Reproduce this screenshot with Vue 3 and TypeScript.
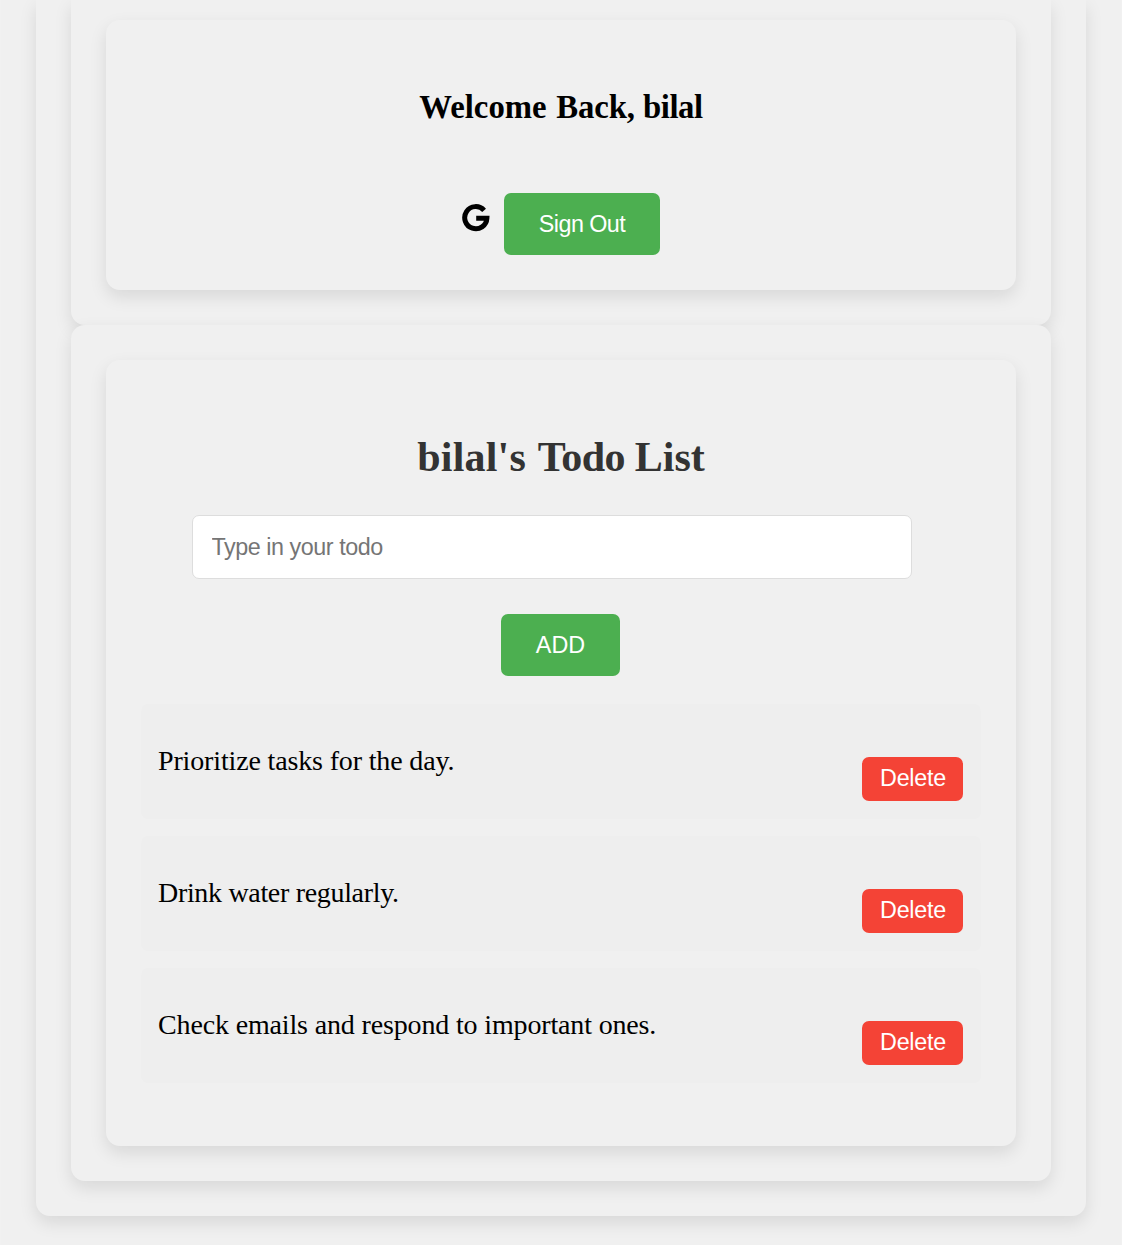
<script setup lang="ts">
import { ref } from 'vue'

const user = ref('bilal')
const draft = ref('')
const todos = ref<string[]>([
  'Prioritize tasks for the day.',
  'Drink water regularly.',
  'Check emails and respond to important ones.',
])

function add(): void {
  const text = draft.value.trim()
  if (!text) return
  todos.value.push(text)
  draft.value = ''
}

function remove(index: number): void {
  todos.value.splice(index, 1)
}
</script>

<template>
  <main class="page">
    <div class="card outer">
      <section class="card account">
        <div class="card welcome">
          <h3>Welcome <span class="back">Back, </span><span class="name">{{ user }}</span></h3>
          <div class="session">
            <svg class="google" viewBox="0 0 28 28" aria-hidden="true">
              <path
                d="M22.1 6.3A11.1 11.1 0 1 0 24.9 14.3H14.2"
                fill="none"
                stroke="#000"
                stroke-width="5"
              />
            </svg>
            <button class="green sign-out">Sign Out</button>
          </div>
        </div>
      </section>
      <section class="card todo">
        <div class="card board">
          <h2><span class="owner">{{ user }}'s </span><span class="kind">Todo </span>List</h2>
          <input v-model="draft" type="text" placeholder="Type in your todo" />
          <button class="green add" @click="add">ADD</button>
          <ul>
            <li v-for="(todo, i) in todos" :key="i">
              <span class="label">{{ todo }}</span>
              <button class="delete" @click="remove(i)">Delete</button>
            </li>
          </ul>
        </div>
      </section>
    </div>
  </main>
</template>

<style>
body {
  margin: 0;
  background: #f1f1f1;
  overflow: hidden;
}
</style>

<style scoped>
.page {
  box-sizing: border-box;
  height: 1245px;
  margin: 0 1px;
  padding: 0 35px;
  overflow: hidden;
  background: #f0f0f0;
  font-family: 'Liberation Serif', 'Times New Roman', serif;
  font-size: 28px;
  color: #000;
}
.card {
  box-sizing: border-box;
  background: #f0f0f0;
  border-radius: 14px;
  box-shadow: 0 7px 17.5px rgba(0, 0, 0, 0.1);
}
.outer {
  height: 1216px;
  padding: 0 35px;
  border-radius: 0 0 14px 14px;
}
.account {
  height: 325px;
  padding: 20px 35px 35px;
  border-radius: 0 0 14px 14px;
}
.welcome {
  height: 270px;
  padding-top: 68px;
}
h3 {
  margin: 0;
  height: 38px;
  line-height: 38px;
  font-size: 32.76px;
  text-align: center;
  white-space: pre;
}
.back {
  margin-left: 1.5px;
  letter-spacing: -0.1px;
}
.name {
  letter-spacing: -0.45px;
}
.session {
  display: flex;
  justify-content: center;
  align-items: flex-start;
  gap: 14px;
  margin-top: 67px;
}
.google {
  width: 28px;
  height: 28px;
  margin-top: 11px;
}
button {
  display: block;
  box-sizing: border-box;
  padding: 0;
  border: 0;
  border-radius: 7px;
  color: #fff;
  font-family: 'Liberation Sans', Arial, sans-serif;
  font-size: 23.33px;
  white-space: nowrap;
}
.green {
  height: 62px;
  background: #4caf50;
}
.sign-out {
  width: 156px;
  letter-spacing: -0.55px;
}
.todo {
  height: 856px;
  padding: 35px;
}
.board {
  height: 786px;
  padding: 75px 35px 0;
}
h2 {
  margin: 0;
  height: 45px;
  line-height: 44px;
  font-size: 42px;
  color: #333;
  text-align: center;
  white-space: pre;
}
.owner {
  letter-spacing: 0.2px;
}
.kind {
  margin-left: 1px;
  letter-spacing: -0.6px;
}
input {
  display: block;
  box-sizing: border-box;
  width: 720px;
  height: 64px;
  margin: 35px 0 0 51px;
  padding: 0 18.5px;
  border: 1px solid #ddd;
  border-radius: 7px;
  outline: none;
  background: #fff;
  font-family: 'Liberation Sans', Arial, sans-serif;
  font-size: 23.33px;
  letter-spacing: -0.45px;
}
input::placeholder {
  color: #757575;
}
.add {
  width: 119px;
  margin: 35px 0 0 360px;
}
ul {
  list-style: none;
  margin: 28px 0 0;
  padding: 0;
  display: flex;
  flex-direction: column;
  gap: 17px;
}
li {
  box-sizing: border-box;
  height: 115px;
  padding: 0 18px 0 17px;
  display: flex;
  justify-content: space-between;
  align-items: flex-start;
  border-radius: 7px;
  background: #eee;
}
.label {
  margin-top: 41px;
  line-height: 32px;
  letter-spacing: -0.15px;
}
li:nth-child(2) .label {
  letter-spacing: -0.32px;
}
.delete {
  width: 101px;
  height: 44px;
  margin-top: 53px;
  padding: 0 0 2px 1px;
  background: #f44336;
  letter-spacing: -0.25px;
}
</style>
